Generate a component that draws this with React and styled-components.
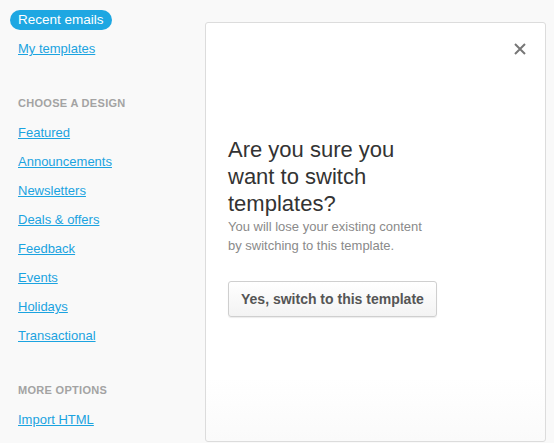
import React from "react";
import styled, { createGlobalStyle } from "styled-components";

const GlobalStyle = createGlobalStyle`
  html, body {
    margin: 0;
    padding: 0;
    background: #f9f9f9;
    font-family: "Liberation Sans", Arial, sans-serif;
  }
`;

const Page = styled.div`
  display: flex;
  width: 554px;
  height: 443px;
  overflow: hidden;
`;

const Sidebar = styled.nav`
  width: 205px;
  flex-shrink: 0;
  display: flex;
  flex-direction: column;
  align-items: flex-start;
  padding-top: 10px;
  box-sizing: border-box;
`;

const Pill = styled.span`
  margin-left: 10px;
  height: 20px;
  line-height: 20px;
  padding: 0 8px;
  border-radius: 10px;
  background: #1ea7e2;
  color: #fff;
  font-size: 13.5px;
`;

const NavLink = styled.a`
  margin-left: 18px;
  height: 29px;
  line-height: 29px;
  font-size: 13px;
  color: #1ba3e0;
  text-decoration: underline;
  cursor: pointer;
  margin-top: ${(p) => p.$top || 0}px;
`;

const Heading = styled.h6`
  margin: ${(p) => p.$top}px 0 ${(p) => p.$bottom}px 18px;
  height: 16px;
  line-height: 16px;
  font-size: 11px;
  font-weight: bold;
  letter-spacing: 0.3px;
  color: #a3a3a3;
`;

const Modal = styled.section`
  position: relative;
  margin-top: 22px;
  width: 341px;
  height: 420px;
  box-sizing: border-box;
  background: linear-gradient(#fff 85%, #fafafa);
  border: 1px solid #dcdcdc;
  border-radius: 3px;
  padding: 113px 22px 0;
`;

const Close = styled.button`
  position: absolute;
  top: 19px;
  right: 18px;
  width: 14px;
  height: 14px;
  padding: 0;
  border: none;
  background: none;
  cursor: pointer;
  display: flex;
`;

const Content = styled.div`
  width: 205px;
`;

const Title = styled.h2`
  margin: 0;
  font-size: 22px;
  line-height: 27px;
  font-weight: normal;
  color: #333;
`;

const Text = styled.p`
  margin: 0;
  font-size: 13px;
  line-height: 19px;
  color: #8a8a8a;
`;

const Button = styled.button`
  margin-top: 26px;
  height: 36px;
  padding: 0 12px;
  border: 1px solid #cfcfcf;
  border-radius: 3px;
  background: linear-gradient(#fff, #f3f3f3);
  box-shadow: 0 1px 1px rgba(0, 0, 0, 0.08);
  font-family: "Liberation Sans", Arial, sans-serif;
  font-size: 14px;
  font-weight: bold;
  color: #555;
  white-space: nowrap;
  cursor: pointer;
`;

const designs = [
  "Featured",
  "Announcements",
  "Newsletters",
  "Deals & offers",
  "Feedback",
  "Events",
  "Holidays",
  "Transactional",
];

export default function App() {
  return (
    <>
      <GlobalStyle />
      <Page>
        <Sidebar>
          <Pill>Recent emails</Pill>
          <NavLink $top={4}>My templates</NavLink>
          <Heading $top={32} $bottom={7}>CHOOSE A DESIGN</Heading>
          {designs.map((d) => (
            <NavLink key={d}>{d}</NavLink>
          ))}
          <Heading $top={32} $bottom={7}>MORE OPTIONS</Heading>
          <NavLink>Import HTML</NavLink>
        </Sidebar>
        <Modal>
          <Close aria-label="Close">
            <svg width="14" height="14" viewBox="0 0 14 14">
              <path d="M2 2 L12 12 M12 2 L2 12" stroke="#777" strokeWidth="2" />
            </svg>
          </Close>
          <Content>
            <Title>Are you sure you want to switch templates?</Title>
            <Text>You will lose your existing content by switching to this template.</Text>
            <Button>Yes, switch to this template</Button>
          </Content>
        </Modal>
      </Page>
    </>
  );
}
